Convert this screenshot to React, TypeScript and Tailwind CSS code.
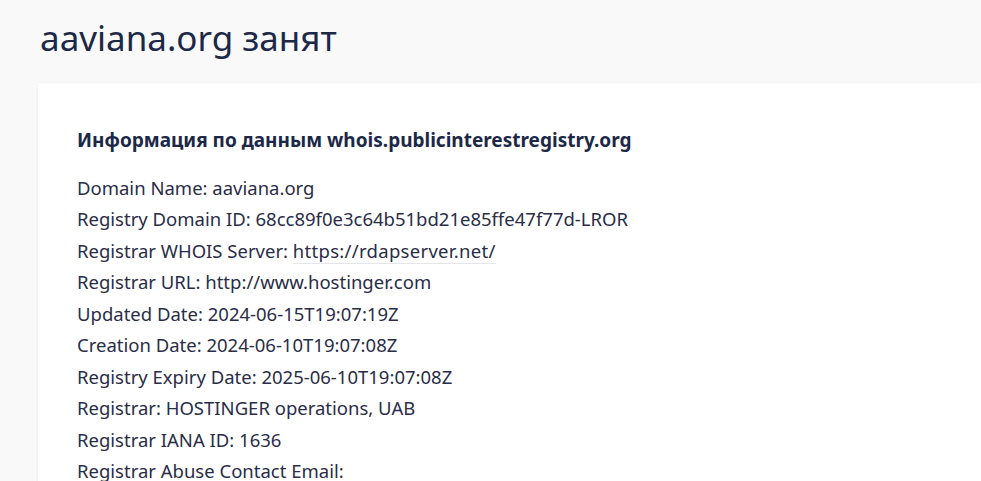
const lines: { label: string; value: string; link?: boolean }[] = [
  { label: "Domain Name", value: "aaviana.org" },
  { label: "Registry Domain ID", value: "68cc89f0e3c64b51bd21e85ffe47f77d-LROR" },
  { label: "Registrar WHOIS Server", value: "https://rdapserver.net/", link: true },
  { label: "Registrar URL", value: "http://www.hostinger.com" },
  { label: "Updated Date", value: "2024-06-15T19:07:19Z" },
  { label: "Creation Date", value: "2024-06-10T19:07:08Z" },
  { label: "Registry Expiry Date", value: "2025-06-10T19:07:08Z" },
  { label: "Registrar", value: "HOSTINGER operations, UAB" },
  { label: "Registrar IANA ID", value: "1636" },
  { label: "Registrar Abuse Contact Email", value: "" },
];

export default function App() {
  return (
    <div className="min-h-screen bg-[#f9f9f9] font-['Noto_Sans',sans-serif] text-[#2a2d48]">
      <div className="pl-[38px] pt-[14px]">
        <h1 className="pl-[2px] text-[35px] leading-[48px] text-[#1c2847]">aaviana.org занят</h1>
        <div className="mt-[21px] bg-white px-[39px] pt-[42px] pb-8 shadow-[0_0_3px_rgba(0,0,0,0.06)]">
          <h2 className="mb-[17px] text-[19px] font-bold leading-[30px] text-[#1c2847]">
            Информация по данным whois.publicinterestregistry.org
          </h2>
          <div className="text-[18.5px] leading-[31.45px]">
            {lines.map((l) => (
              <div key={l.label}>
                {l.label}:{" "}
                {l.link ? (
                  <span className="border-b border-[#e3e5ea] tracking-[0.3px]">{l.value}</span>
                ) : (
                  l.value
                )}
              </div>
            ))}
          </div>
        </div>
      </div>
    </div>
  );
}
